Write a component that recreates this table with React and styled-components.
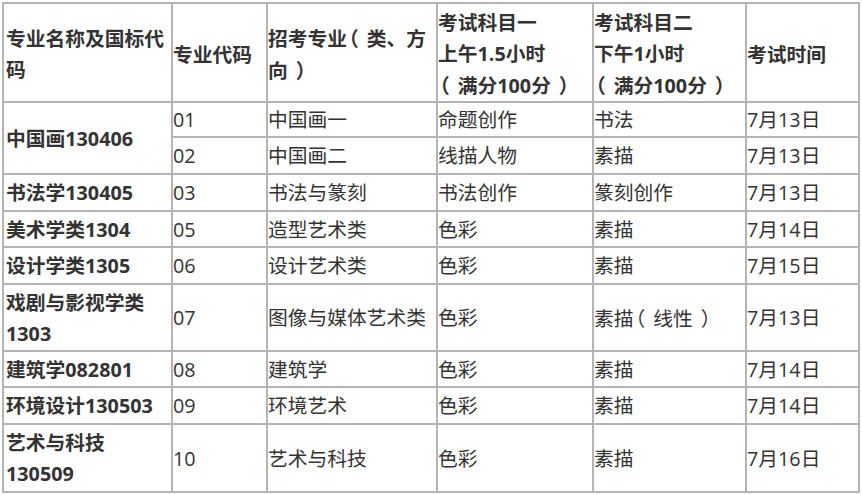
import styled, { createGlobalStyle } from "styled-components";

const GlobalStyle = createGlobalStyle`
body {
margin: 0;
background: #ffffff;
}
`

const Page = styled.div`
padding: 2px 0 0 2px;
`

const Table = styled.table`
border-collapse: collapse;
table-layout: fixed;
width: 856px;
font-family: "Open Sans", "Noto Sans CJK SC", sans-serif;
font-size: 19.75px;
line-height: 31px;
color: #333333;
border-top: 2px solid #ececec;
border-left: 2px solid #ececec;
`

const Row = styled.tr`
height: ${props => props.h}px;
`

const Cell = styled.td`
border: 2px solid #b4b4b4;
padding: 0 1px 0 ${props => props.first ? 2 : 0}px;
vertical-align: middle;
white-space: nowrap;
overflow: hidden;
font-weight: ${props => props.bold ? 700 : 400};
`

const HeadCell = styled(Cell).attrs({as: "th"})`
text-align: left;
font-weight: 700;
line-height: 31px;
padding-top: 3px;
`

// full-width brackets sit at the outer edge of their box, like in the source font
const Paren = styled.span`
display: inline-block;
width: 1em;
font-family: "Noto Sans CJK SC", sans-serif;
font-feature-settings: "halt";
text-align: ${props => props.open ? "left" : "right"};
padding: ${props => props.open ? "0 0 0 0.1em" : "0 0.1em 0 0"};
box-sizing: border-box;
`

const Text = ({children}) => {
    const parts = children.split(/([（）])/).filter(Boolean)
    return parts.map((p, i) => {
        if (p === "（") return <Paren key={i} open>（</Paren>
        if (p === "）") return <Paren key={i}>）</Paren>
        return p
    })
}

const Lines = ({text}) => {
    if (!Array.isArray(text)) return <Text>{text}</Text>
    return text.map((t, i) => <div key={i}><Text>{t}</Text></div>)
}

const widths = [169, 95, 170, 156, 153, 113]

const rows = [
    {h: 35, major: "中国画130406", span: 2, code: "01", dir: "中国画一", one: "命题创作", two: "书法", date: "7月13日"},
    {h: 37, code: "02", dir: "中国画二", one: "线描人物", two: "素描", date: "7月13日"},
    {h: 37, major: "书法学130405", code: "03", dir: "书法与篆刻", one: "书法创作", two: "篆刻创作", date: "7月13日"},
    {h: 36, major: "美术学类1304", code: "05", dir: "造型艺术类", one: "色彩", two: "素描", date: "7月14日"},
    {h: 37, major: "设计学类1305", code: "06", dir: "设计艺术类", one: "色彩", two: "素描", date: "7月15日"},
    {h: 67, major: ["戏剧与影视学类", "1303"], code: "07", dir: "图像与媒体艺术类", one: "色彩", two: "素描（线性）", date: "7月13日"},
    {h: 36, major: "建筑学082801", code: "08", dir: "建筑学", one: "色彩", two: "素描", date: "7月14日"},
    {h: 37, major: "环境设计130503", code: "09", dir: "环境艺术", one: "色彩", two: "素描", date: "7月14日"},
    {h: 68, major: ["艺术与科技", "130509"], code: "10", dir: "艺术与科技", one: "色彩", two: "素描", date: "7月16日"},
]

const App = () => {
    return (
        <Page>
            <GlobalStyle/>
            <Table>
                <colgroup>
                    {widths.map((w, i) => <col key={i} style={{width: w}}/>)}
                </colgroup>
                <thead>
                    <Row h={97}>
                        <HeadCell first><Lines text={["专业名称及国标代", "码"]}/></HeadCell>
                        <HeadCell>专业代码</HeadCell>
                        <HeadCell><Lines text={["招考专业（类、方", "向）"]}/></HeadCell>
                        <HeadCell><Lines text={["考试科目一", "上午1.5小时", "（满分100分）"]}/></HeadCell>
                        <HeadCell><Lines text={["考试科目二", "下午1小时", "（满分100分）"]}/></HeadCell>
                        <HeadCell>考试时间</HeadCell>
                    </Row>
                </thead>
                <tbody>
                    {rows.map((r, i) => (
                        <Row key={i} h={r.h}>
                            {r.major && (
                                <Cell first bold rowSpan={r.span || 1}>
                                    <Lines text={r.major}/>
                                </Cell>
                            )}
                            <Cell>{r.code}</Cell>
                            <Cell><Lines text={r.dir}/></Cell>
                            <Cell>{r.one}</Cell>
                            <Cell><Lines text={r.two}/></Cell>
                            <Cell>{r.date}</Cell>
                        </Row>
                    ))}
                </tbody>
            </Table>
        </Page>
    )
}

export default App;
